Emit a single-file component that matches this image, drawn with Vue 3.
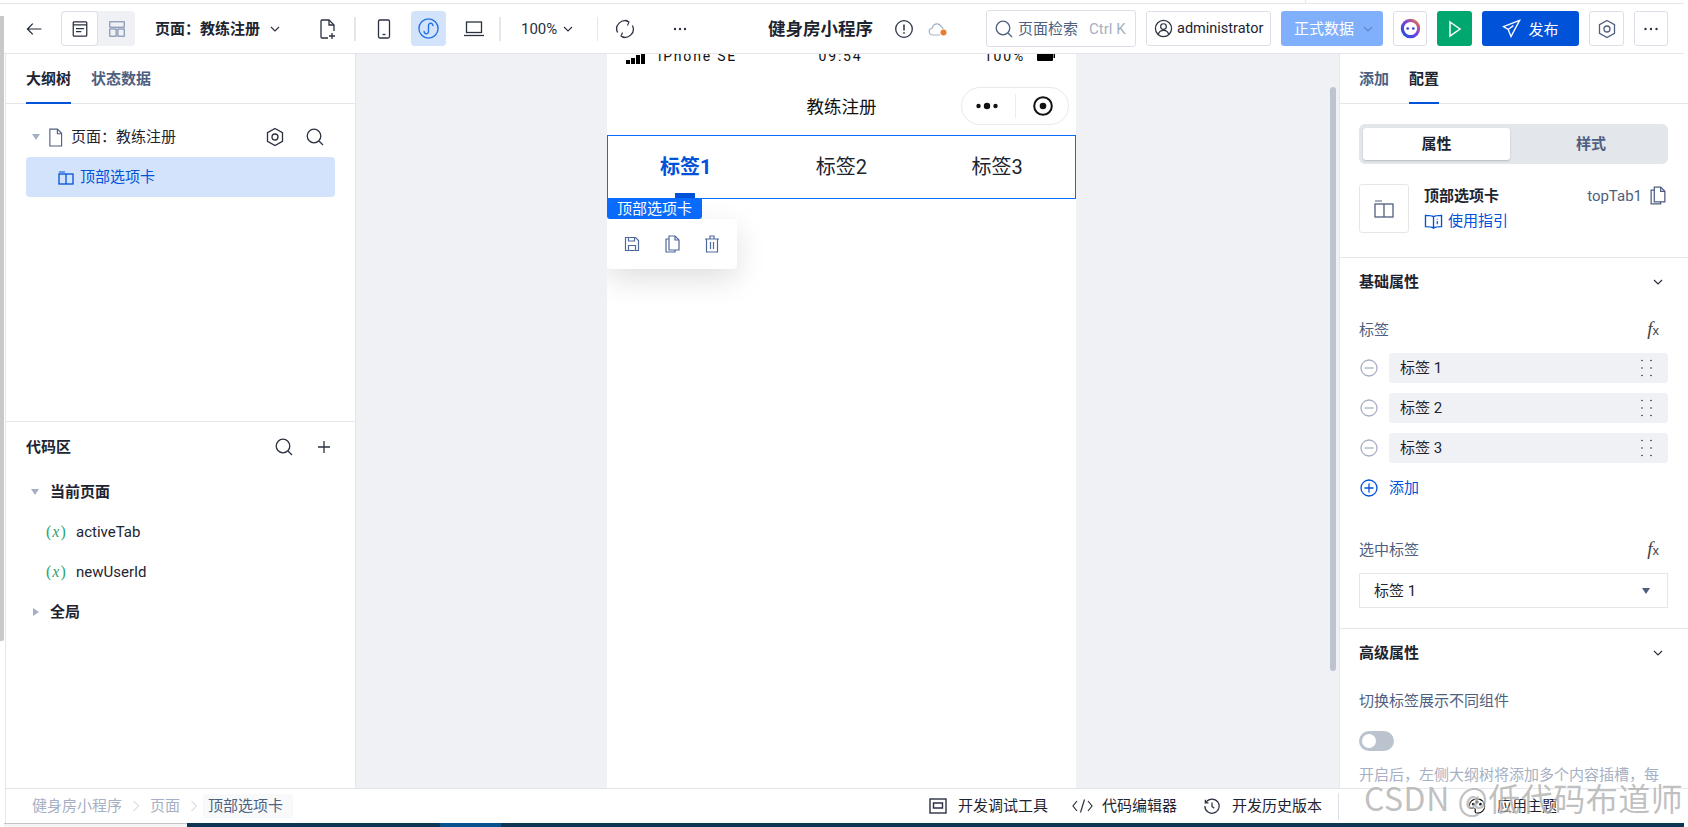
<script setup>
const tabs = [
  { label: '标签1', active: true },
  { label: '标签2', active: false },
  { label: '标签3', active: false }
]
const rows = ['标签 1', '标签 2', '标签 3']
const vars = ['activeTab', 'newUserId']
const pageName = '页面\uFF1A教练注册'
const hintText = '开启后\uFF0C左侧大纲树将添加多个内容插槽\uFF0C每'
</script>

<template>
  <div class="page">
    <div class="strip"></div>
    <div class="topgap"><i class="notch"></i></div>

    <header class="header">
      <svg class="ic back" viewBox="0 0 22 22" fill="none" stroke="#1f2733" stroke-width="1.500"><path d="M20 11H3M9.500 4.500 3 11l6.500 6.500"/></svg>
      <div class="seg">
        <button class="seg-a">
          <svg viewBox="0 0 20 20" width="18" height="18" fill="none" stroke="#2a3140" stroke-width="1.400"><rect x="2.500" y="2" width="15" height="16" rx="1"/><path d="M2.500 5.500h15M5.500 9.500h9M5.500 13h6"/></svg>
        </button>
        <button class="seg-b">
          <svg viewBox="0 0 20 20" width="18" height="18" fill="none" stroke="#6a7ea3" stroke-width="1.100"><rect x="2" y="2" width="16" height="6"/><rect x="2" y="10" width="7" height="8"/><rect x="11" y="10" width="7" height="8"/></svg>
        </button>
      </div>
      <div class="pagesel">{{ pageName }}</div>
      <svg class="chev c1" viewBox="0 0 12 12" fill="none" stroke="#2a3140" stroke-width="1.200"><path d="M2 4l4 4 4-4"/></svg>
      <svg class="ic newpage" viewBox="0 0 20 22" fill="none" stroke="#2a3140" stroke-width="1.300"><path d="M10 20H4a1 1 0 0 1-1-1V3a1 1 0 0 1 1-1h7l5 5v6"/><path d="M11 2v5h5"/><path d="M14 15v6M11 18h6"/></svg>
      <i class="vdiv d1"></i>
      <button class="ibtn b1">
        <svg viewBox="0 0 20 22" width="20" height="22" fill="none" stroke="#2a3140" stroke-width="1.300"><rect x="4.500" y="2" width="11" height="18" rx="1.500"/><path d="M8.500 16.500h3"/></svg>
      </button>
      <button class="ibtn b2 on">
        <svg viewBox="0 0 24 24" width="23" height="23" fill="none" stroke="#1e6fe8" stroke-width="1.400"><circle cx="12" cy="12" r="10"/><path d="M7.500 14.500a2.300 2.300 0 1 0 4.500.7V8.800a2.300 2.300 0 1 1 4.500.7"/></svg>
      </button>
      <button class="ibtn b2">
        <svg viewBox="0 0 22 20" width="22" height="20" fill="none" stroke="#2a3140" stroke-width="1.300"><rect x="3.500" y="3" width="15" height="10.500"/><path d="M1 16.500h20"/></svg>
      </button>
      <i class="vdiv d2"></i>
      <span class="zoomtxt">100%</span>
      <svg class="chev c2" viewBox="0 0 12 12" fill="none" stroke="#2a3140" stroke-width="1.100"><path d="M2 4l4 4 4-4"/></svg>
      <i class="vdiv d3"></i>
      <svg class="ic sync" viewBox="0 0 20 20" fill="none" stroke="#2a3140" stroke-width="1.300"><path d="M2.600 13.500A8 8 0 0 1 13.500 2.800"/><path d="M17.400 6.500A8 8 0 0 1 6.500 17.200"/><path d="M10.500 1 14 3l-1.500 3.500M9.500 19 6 17l1.500-3.500" stroke-width="1.100"/></svg>
      <svg class="ic more1" viewBox="0 0 20 20" fill="#2a3140"><circle cx="5" cy="10" r="1.200"/><circle cx="10" cy="10" r="1.200"/><circle cx="15" cy="10" r="1.200"/></svg>
      <div class="apptitle">健身房小程序</div>
      <svg class="ic info" viewBox="0 0 20 20" fill="none" stroke="#2a3140" stroke-width="1.300"><circle cx="10" cy="10" r="8.300"/><path d="M10 5.500v6M10 13.300v1.500" stroke-width="1.500"/></svg>
      <svg class="cloud" viewBox="0 0 20 16" fill="none" stroke="#a6b0c4" stroke-width="1.200"><path d="M12 14H5a3.500 3.500 0 0 1-.5-7 4.500 4.500 0 0 1 8.700-1.200 3.500 3.500 0 0 1 2 2.200"/><circle cx="15.500" cy="11.500" r="3" fill="#ed7b2f" stroke="none"/></svg>
      <div class="search">
        <svg viewBox="0 0 20 20" width="20" height="20" fill="none" stroke="#4e5f7f" stroke-width="1.300"><circle cx="9" cy="9" r="6.800"/><path d="M14 14l4 4"/></svg>
        <span class="s-txt">页面检索</span>
        <span class="s-key">Ctrl K</span>
      </div>
      <div class="user">
        <svg viewBox="0 0 20 20" width="19" height="19" fill="none" stroke="#2a3140" stroke-width="1.300"><circle cx="10" cy="10" r="8.500"/><circle cx="10" cy="8" r="3"/><path d="M4.500 16c1-3 3-4 5.500-4s4.500 1 5.500 4"/></svg>
        <span>administrator</span>
      </div>
      <div class="datasrc">
        <span>正式数据</span>
        <svg viewBox="0 0 12 12" width="12" height="12" fill="none" stroke="#5f86c8" stroke-width="1.200"><path d="M2 4l4 4 4-4"/></svg>
      </div>
      <button class="obtn ai">
        <svg viewBox="0 0 22 22" width="23" height="23">
          <defs><linearGradient id="aig" x1="0" y1="1" x2="1" y2="0"><stop offset="0" stop-color="#1c4fe0"/><stop offset=".55" stop-color="#7b3fe0"/><stop offset="1" stop-color="#f0783c"/></linearGradient></defs>
          <circle cx="11" cy="11" r="7.800" fill="none" stroke="url(#aig)" stroke-width="3"/>
          <circle cx="8.300" cy="11" r="1.300" fill="#3d3fd8"/><circle cx="13.700" cy="11" r="1.300" fill="#3d3fd8"/>
        </svg>
      </button>
      <button class="runbtn">
        <svg viewBox="0 0 16 18" width="16" height="18" fill="none" stroke="#fff" stroke-width="1.500"><path d="M3 2l10 7-10 7z"/></svg>
      </button>
      <button class="pub">
        <svg viewBox="0 0 20 20" width="19" height="19" fill="none" stroke="#fff" stroke-width="1.400"><path d="M18.500 1.500 1.500 8l5 3 3 7.500zM6.500 11 12 7"/></svg>
        <span>发布</span>
      </button>
      <button class="obtn gearb">
        <svg viewBox="0 0 20 20" width="20" height="20" fill="none" stroke="#4e5f7f" stroke-width="1.300"><path d="M10 1.500 17.500 5.700v8.600L10 18.500l-7.500-4.200V5.700z"/><circle cx="10" cy="10" r="3"/></svg>
      </button>
      <button class="obtn moreb">
        <svg viewBox="0 0 20 20" width="20" height="20" fill="#2a3140"><circle cx="4.500" cy="10" r="1.200"/><circle cx="10" cy="10" r="1.200"/><circle cx="15.500" cy="10" r="1.200"/></svg>
      </button>
    </header>

    <div class="main">
      <aside class="left">
        <div class="tabbar lt">
          <div class="tab active">大纲树</div>
          <div class="tab">状态数据</div>
        </div>
        <div class="outline">
          <div class="o-row">
            <i class="tri down t1"></i>
            <svg class="doc" viewBox="0 0 16 20" fill="none" stroke="#4e5f7f" stroke-width="1.200"><path d="M2 1h8l4.500 4.500V19H2z"/><path d="M10 1v5h4.500"/></svg>
            <span class="o-txt">{{ pageName }}</span>
            <svg class="ic act1" viewBox="0 0 20 20" fill="none" stroke="#2a3140" stroke-width="1.300"><path d="M10 1.500 17.500 5.700v8.600L10 18.500l-7.500-4.200V5.700z"/><circle cx="10" cy="10" r="3"/></svg>
            <svg class="ic act2" viewBox="0 0 20 20" fill="none" stroke="#2a3140" stroke-width="1.300"><circle cx="9" cy="9" r="6.800"/><path d="M14 14l4 4"/></svg>
          </div>
          <div class="o-sel">
            <svg viewBox="0 0 16 16" width="16" height="16" fill="none" stroke="#0052d9" stroke-width="1.300"><path d="M1 3h6" stroke-width="1"/><rect x="1" y="5" width="14" height="10"/><path d="M8 5v10"/></svg>
            <span>顶部选项卡</span>
          </div>
        </div>
        <div class="code">
          <div class="c-head">
            <span class="bold">代码区</span>
            <svg class="ic ca1" viewBox="0 0 20 20" fill="none" stroke="#2a3140" stroke-width="1.300"><circle cx="9" cy="9" r="6.800"/><path d="M14 14l4 4"/></svg>
            <svg class="ic ca2" viewBox="0 0 20 20" fill="none" stroke="#2a3140" stroke-width="1.300"><path d="M10 4v12M4 10h12"/></svg>
          </div>
          <div class="c-row group"><i class="tri down t2"></i><span class="bold">当前页面</span></div>
          <div class="c-row var" v-for="v in vars" :key="v"><span class="xv">(<i>x</i>)</span><span>{{ v }}</span></div>
          <div class="c-row group"><i class="tri rgt t3"></i><span class="bold">全局</span></div>
        </div>
      </aside>

      <section class="canvas">
        <div class="phone">
          <div class="status">
            <div class="st-l">
              <svg viewBox="0 0 20 10" width="20" height="10" fill="#000"><rect x="0" y="6" width="4" height="4"/><rect x="5" y="4" width="4" height="6"/><rect x="10" y="1" width="4" height="9"/><rect x="15" y="0" width="4" height="10"/></svg>
              <span>iPhone SE</span>
            </div>
            <span>09:54</span>
            <div class="st-r">
              <span>100%</span>
              <svg viewBox="0 0 18 10" width="18" height="10"><rect x="0" y="0" width="16" height="10" rx="1" fill="#000"/><rect x="16.500" y="3" width="1.500" height="4" fill="#000"/></svg>
            </div>
          </div>
          <div class="nav">教练注册</div>
          <div class="capsule">
            <svg viewBox="0 0 24 10" width="24" height="10" fill="#111"><circle cx="3.500" cy="5" r="2.200"/><circle cx="12" cy="5" r="3.200"/><circle cx="20.500" cy="5" r="2.200"/></svg>
            <i class="c-div"></i>
            <svg viewBox="0 0 20 20" width="20" height="20" fill="none"><circle cx="10" cy="10" r="8.800" stroke="#111" stroke-width="2"/><circle cx="10" cy="10" r="3.300" fill="#111"/></svg>
          </div>
          <div class="toptabs">
            <div v-for="t in tabs" :key="t.label" class="tt" :class="{ on: t.active }">
              {{ t.label }}
              <i v-if="t.active" class="ind"></i>
            </div>
            <div class="tag">顶部选项卡</div>
            <div class="tools">
              <svg viewBox="0 0 18 18" width="18" height="18" fill="none" stroke="#4e6a9c" stroke-width="1.200"><path d="M2.500 2.500h10l3 3v10h-13z"/><path d="M5.500 2.500v3.500h6V2.500M5.500 15.500V10.500h7v5"/></svg>
              <svg viewBox="0 0 18 20" width="18" height="20" fill="none" stroke="#4e6a9c" stroke-width="1.200"><path d="M6 2h6l4 4v10H6z"/><path d="M12 2v4h4M6 5H3v13h9v-2"/></svg>
              <svg viewBox="0 0 18 20" width="18" height="20" fill="none" stroke="#4e6a9c" stroke-width="1.200"><path d="M2 5h14M7 5V2h4v3M3.500 5v13h11V5M7.500 8v7M10.500 8v7"/></svg>
            </div>
          </div>
        </div>
        <i class="vscroll"></i>
      </section>

      <aside class="right">
        <div class="tabbar rt">
          <div class="tab">添加</div>
          <div class="tab active">配置</div>
        </div>
        <div class="info-sec">
          <div class="switch">
            <div class="sw on">属性</div>
            <div class="sw off">样式</div>
          </div>
          <div class="comp">
            <div class="comp-box">
              <svg viewBox="0 0 20 20" width="20" height="20" fill="none" stroke="#4e5f7f" stroke-width="1.300"><path d="M1 2h7" stroke-width="1"/><rect x="1" y="5" width="18" height="13"/><path d="M10 5v13"/></svg>
            </div>
            <div class="comp-meta">
              <div class="bold">顶部选项卡</div>
              <div class="guide">
                <svg viewBox="0 0 20 18" width="19" height="17" fill="none" stroke="#0052d9" stroke-width="1.400"><path d="M10 4C8 2.500 5 2.500 1.500 2.500v12c3.500 0 6.500 0 8.500 1.500 2-1.500 5-1.500 8.500-1.500v-12C15 2.500 12 2.500 10 4zM10 4v12"/><path d="M14 6v1M14 8.500V12" stroke-width="1.300"/></svg>
                <span>使用指引</span>
              </div>
            </div>
            <div class="comp-id">
              <span>topTab1</span>
              <svg viewBox="2 1 15 18" width="16" height="19" fill="none" stroke="#4e5f7f" stroke-width="1.200"><path d="M6 2h6l4 4v10H6z"/><path d="M12 2v4h4M6 5H3v13h9v-2"/></svg>
            </div>
          </div>
        </div>

        <div class="sec">
          <div class="sec-head">
            <span class="bold">基础属性</span>
            <svg viewBox="0 0 12 12" width="12" height="12" fill="none" stroke="#2a3140" stroke-width="1.200"><path d="M2 4l4 4 4-4"/></svg>
          </div>
          <div class="lab-row">
            <span>标签</span>
            <span class="fx"><i>f</i><small>x</small></span>
          </div>
          <div class="rows">
            <div class="row" v-for="r in rows" :key="r">
              <svg viewBox="0 0 18 18" width="18" height="18" fill="none" stroke="#a6b0c4" stroke-width="1.300"><circle cx="9" cy="9" r="8"/><path d="M4.500 9h9"/></svg>
              <div class="pill">
                <span>{{ r }}</span>
                <svg viewBox="0 0 12 20" width="12" height="20" fill="#333"><circle cx="2" cy="2.500" r=".8"/><circle cx="2" cy="10" r=".8"/><circle cx="2" cy="17.500" r=".8"/><circle cx="11" cy="2.500" r=".8"/><circle cx="11" cy="10" r=".8"/><circle cx="11" cy="17.500" r=".8"/></svg>
              </div>
            </div>
          </div>
          <div class="addrow">
            <svg viewBox="0 0 18 18" width="18" height="18" fill="none" stroke="#0052d9" stroke-width="1.300"><circle cx="9" cy="9" r="8"/><path d="M4.500 9h9M9 4.500v9"/></svg>
            <span>添加</span>
          </div>
          <div class="lab-row l2">
            <span>选中标签</span>
            <span class="fx"><i>f</i><small>x</small></span>
          </div>
          <div class="select">
            <span>标签 1</span>
            <i class="tri down t4"></i>
          </div>
        </div>

        <div class="sec adv">
          <div class="sec-head">
            <span class="bold">高级属性</span>
            <svg viewBox="0 0 12 12" width="12" height="12" fill="none" stroke="#2a3140" stroke-width="1.200"><path d="M2 4l4 4 4-4"/></svg>
          </div>
          <div class="lab-row l3"><span>切换标签展示不同组件</span></div>
          <div class="toggle"><i class="knob"></i></div>
          <div class="hint">{{ hintText }}</div>
        </div>
      </aside>
    </div>

    <footer class="footer">
      <div class="crumbs">
        <span class="cr">健身房小程序</span>
        <svg viewBox="0 0 8 12" width="8" height="12" fill="none" stroke="#c3cad8" stroke-width="1"><path d="M1.500 1l5 5-5 5"/></svg>
        <span class="cr">页面</span>
        <svg viewBox="0 0 8 12" width="8" height="12" fill="none" stroke="#c3cad8" stroke-width="1"><path d="M1.500 1l5 5-5 5"/></svg>
        <span class="cr cur">顶部选项卡</span>
      </div>
      <div class="f-right">
        <div class="f-item i1">
          <svg viewBox="0 0 18 18" width="18" height="18" fill="none" stroke="#2a3140" stroke-width="1.400"><rect x="1" y="2" width="16" height="14"/><path d="M4.500 6h9v5h-9z"/></svg>
          <span>开发调试工具</span>
        </div>
        <div class="f-item i2">
          <svg viewBox="0 0 21 16" width="21" height="16" fill="none" stroke="#2a3140" stroke-width="1.200"><path d="M5 3 1 8l4 5M12.500 1.500l-4 13M16 3l4 5-4 5"/></svg>
          <span>代码编辑器</span>
        </div>
        <div class="f-item i3">
          <svg viewBox="0 0 18 18" width="16" height="16" fill="none" stroke="#2a3140" stroke-width="1.400"><path d="M2.500 4.500A8 8 0 1 1 1 9M1.500 2v3.500H5M9 5v4.500l2.500 2"/></svg>
          <span>开发历史版本</span>
        </div>
        <i class="f-div"></i>
        <div class="f-item i4">
          <svg viewBox="0 0 20 20" width="18" height="18" fill="none" stroke="#111" stroke-width="1.400"><path d="M10 2C5 2 1.500 5.500 1.500 9.500c0 3 2.500 3.500 4 3 1.500-.5 3 .5 2.500 2-.5 2 .5 3.500 2.500 3.500 4.500 0 8-3.500 8-8S15 2 10 2z"/><circle cx="6" cy="8" r="1" fill="#111"/><circle cx="10" cy="5.500" r="1" fill="#111"/><circle cx="14" cy="8" r="1" fill="#111"/></svg>
          <span>应用主题</span>
        </div>
      </div>
    </footer>

    <div class="taskbar">
      <i class="tb-light"></i>
      <i class="tb-dark a"></i>
      <i class="tb-blue"></i>
      <i class="tb-dark b"></i>
    </div>

    <div class="watermark">CSDN @低代码布道师</div>
  </div>
</template>

<style>
html, body { margin: 0; padding: 0; background: #fff; }
</style>

<style scoped>
.page {
  position: relative;
  width: 1688px;
  height: 827px;
  overflow: hidden;
  background: #fff;
  display: flex;
  flex-direction: column;
  font-family: Roboto, "Noto Sans CJK SC", sans-serif;
  font-size: 15px;
  color: #1d2430;
  line-height: 20px;
}
* { box-sizing: border-box; }
button { padding: 0; margin: 0; background: none; border: 0; display: flex; align-items: center; justify-content: center; }
i { font-style: normal; display: block; }
.bold { font-weight: 700; }
.strip { position: absolute; left: 0; top: 16px; width: 4px; height: 625px; background: #c9c9c9; border-radius: 0 0 2px 0; z-index: 3; }
.topgap { height: 3px; position: relative; flex: none; }
.notch { position: absolute; left: 1305px; top: 0; width: 1px; height: 3px; background: #e7e9ee; }

.header { height: 51px; flex: none; display: flex; align-items: center; border-top: 1px solid #e3e6eb; border-bottom: 1px solid #e3e6eb; width: 1684px; }
.ic { width: 20px; height: 20px; flex: none; display: block; }
.back { width: 18px; height: 18px; margin-left: 25px; }
.seg { margin-left: 18px; width: 74px; height: 35px; background: #f0f1f5; border-radius: 4px; display: flex; }
.seg-a { width: 37px; height: 35px; background: #fff; border: 1px solid #dcdfe8; border-radius: 4px; }
.seg-b { width: 37px; height: 35px; }
.pagesel { margin-left: 20px; font-weight: 700; white-space: nowrap; width: 105px; }
.chev { width: 12px; height: 12px; flex: none; }
.c1 { margin-left: 9px; }
.newpage { margin-left: 37px; height: 22px; }
.vdiv { width: 2px; height: 24px; background: #e3e6eb; flex: none; }
.d1 { margin-left: 16px; }
.ibtn { width: 35px; height: 35px; border-radius: 4px; flex: none; }
.b1 { margin-left: 10px; }
.b2 { margin-left: 10px; }
.ibtn.on { background: #d2e3fb; }
.d2 { margin-left: 8px; }
.zoomtxt { margin-left: 20px; width: 37px; white-space: nowrap; color: #2a3140; }
.c2 { margin-left: 4px; }
.d3 { margin-left: 23px; width: 1px; }
.sync { margin-left: 17px; }
.more1 { margin-left: 35px; }
.apptitle { margin-left: 78px; width: 106px; font-size: 17.500px; font-weight: 700; white-space: nowrap; }
.info { margin-left: 20px; }
.cloud { margin-left: 14px; width: 20px; height: 16px; flex: none; }
.search { margin-left: 38px; width: 150px; height: 37px; border: 1px solid #dcdfe8; border-radius: 3px; display: flex; align-items: center; padding-left: 7px; flex: none; white-space: nowrap; }
.s-txt { margin-left: 4px; color: #4e5f7f; }
.s-key { margin-left: 11px; color: #a6b0c4; }
.user { margin-left: 10px; width: 125px; height: 35px; border: 1px solid #dcdfe8; border-radius: 3px; display: flex; align-items: center; gap: 4px; padding-left: 7px; flex: none; white-space: nowrap; font-size: 14.500px; }
.datasrc { margin-left: 10px; width: 102px; height: 35px; background: #80b0fb; border-radius: 3px; display: flex; align-items: center; padding-left: 13px; gap: 8px; color: #fff; flex: none; }
.obtn { height: 35px; border: 1px solid #dcdfe8; border-radius: 3px; flex: none; }
.ai { margin-left: 10px; width: 34px; }
.runbtn { margin-left: 10px; width: 35px; height: 35px; background: #00a870; border-radius: 3px; flex: none; }
.pub { margin-left: 10px; width: 97px; height: 35px; background: #0052d9; color: #fff; border-radius: 3px; gap: 7px; flex: none; font-size: 15px; font-family: inherit; }
.gearb { margin-left: 10px; width: 35px; }
.moreb { margin-left: 10px; width: 34px; }

.main { flex: 1; min-height: 0; display: flex; }
.left { margin-left: 5px; width: 351px; flex: none; border-left: 1px solid #e3e6eb; border-right: 1px solid #e3e6eb; display: flex; flex-direction: column; }
.tabbar { height: 50px; flex: none; display: flex; border-bottom: 1px solid #e3e6eb; }
.lt { padding-left: 20px; gap: 20px; }
.rt { padding-left: 19px; gap: 20px; }
.tab { height: 50px; display: flex; align-items: center; font-weight: 700; color: #4e5f7f; white-space: nowrap; position: relative; }
.tab.active { color: #1d2430; border-bottom: 2px solid #0052d9; padding-top: 2px; }
.outline { height: 318px; flex: none; border-bottom: 1px solid #e3e6eb; padding: 13px 20px 0; }
.o-row { height: 40px; display: flex; align-items: center; }
.tri { width: 0; height: 0; flex: none; }
.tri.down { border-left: 4px solid transparent; border-right: 4px solid transparent; border-top: 6px solid #a6b0c4; }
.tri.rgt { border-top: 4px solid transparent; border-bottom: 4px solid transparent; border-left: 6px solid #a6b0c4; }
.t1 { margin-left: 6px; }
.doc { width: 15px; height: 19px; margin-left: 8px; flex: none; }
.o-txt { margin-left: 8px; white-space: nowrap; }
.act1 { margin-left: auto; }
.act2 { margin-left: 20px; margin-right: 10px; }
.o-sel { height: 40px; background: #d2e3fb; border-radius: 4px; display: flex; align-items: center; padding-left: 32px; gap: 6px; color: #0052d9; }
.code { flex: 1; }
.c-head { height: 50px; display: flex; align-items: center; padding-left: 20px; }
.ca1 { margin-left: auto; }
.ca2 { margin-left: 20px; margin-right: 21px; }
.c-row { height: 40px; display: flex; align-items: center; }
.group { padding-left: 25px; }
.t2 { margin-right: 11px; }
.t3 { margin-left: 2px; margin-right: 11px; }
.var { padding-left: 40px; }
.xv { width: 20px; margin-right: 10px; color: #2ba471; font-family: "Liberation Serif", serif; white-space: nowrap; font-size: 16px; letter-spacing: 1px; }
.xv i { display: inline; font-style: italic; }

.canvas { flex: 1; min-width: 0; background: #f0f1f5; position: relative; overflow: hidden; }
.phone { margin-left: 251px; width: 469px; height: 100%; background: #fff; position: relative; overflow: hidden; }
.status { margin-top: -8px; height: 20px; display: grid; grid-template-columns: 1fr auto 1fr; align-items: center; padding: 0 21px 0 19px; font-size: 14px; letter-spacing: 1.800px; color: #111; }
.st-l { display: flex; align-items: center; gap: 12px; }
.st-l svg { margin-top: 6px; }
.st-r { display: flex; align-items: center; justify-content: flex-end; gap: 12px; }
.nav { margin-top: 13px; height: 56px; display: flex; align-items: center; justify-content: center; font-size: 17.500px; color: #111; }
.capsule { position: absolute; right: 7px; top: 33px; width: 108px; height: 38px; border: 1px solid #e8e9ec; border-radius: 19px; display: flex; align-items: center; padding-left: 13px; }
.c-div { width: 1px; height: 24px; background: #ececec; margin: 0 17px 0 16px; }
.toptabs { height: 64px; border: 1px solid #0a6cff; display: grid; grid-template-columns: repeat(3, 1fr); position: relative; }
.tt { display: flex; align-items: center; justify-content: center; font-size: 20px; color: #1d2430; position: relative; }
.tt.on { color: #0052d9; font-weight: 700; }
.ind { position: absolute; left: 67px; bottom: 0; width: 20px; height: 5px; background: #0052d9; }
.tag { position: absolute; left: -1px; top: 63px; width: 95px; height: 20px; background: #0a6cff; color: #fff; border-radius: 0 0 3px 3px; padding-left: 10px; white-space: nowrap; }
.tools { position: absolute; left: -1px; top: 83px; width: 130px; height: 50px; background: #fff; border-radius: 4px; box-shadow: 0 10px 30px rgba(0, 0, 0, .13); display: flex; align-items: center; gap: 22px; padding-left: 16px; }
.vscroll { position: absolute; right: 3px; top: 33px; width: 6px; height: 584px; background: #bdc3cf; border-radius: 3px; }

.right { width: 349px; flex: none; border-left: 1px solid #e3e6eb; overflow: hidden; }
.info-sec { padding: 20px 20px 24px 19px; border-bottom: 1px solid #e3e6eb; }
.switch { height: 40px; padding: 4px; background: #e3e6eb; border-radius: 6px; display: grid; grid-template-columns: 147px 1fr; }
.sw { display: flex; align-items: center; justify-content: center; font-weight: 700; color: #4e5f7f; }
.sw.off { padding-left: 8px; }
.sw.on { background: #fff; color: #1d2430; border-radius: 3px; box-shadow: 0 1px 2px rgba(0, 0, 0, .2); }
.comp { margin-top: 20px; display: flex; }
.comp-box { width: 50px; height: 49px; border: 1px solid #e3e6eb; border-radius: 3px; display: flex; align-items: center; justify-content: center; }
.comp-meta { margin-left: 15px; padding-top: 2px; }
.guide { margin-top: 5px; display: flex; align-items: center; gap: 5px; color: #0052d9; }
.comp-id { margin-left: auto; display: flex; align-items: flex-start; gap: 8px; color: #4e5f7f; padding-right: 2px; padding-top: 2px; }
.sec { padding: 0 20px 20px 19px; border-bottom: 1px solid #e3e6eb; }
.sec-head { height: 48px; display: flex; align-items: center; justify-content: space-between; padding-right: 4px; }
.lab-row { margin-top: 14px; display: flex; justify-content: space-between; color: #4e5f7f; height: 20px; align-items: center; padding-right: 9px; }
.fx { font-family: "Liberation Serif", serif; color: #444; font-size: 19px; display: flex; align-items: baseline; }
.fx i { font-style: italic; }
.fx small { font-size: 13px; font-family: "Liberation Sans", sans-serif; }
.rows { margin-top: 13px; display: flex; flex-direction: column; gap: 10px; }
.row { display: flex; align-items: center; gap: 11px; padding-left: 1px; }
.pill { flex: 1; height: 30px; background: #f0f1f5; border-radius: 3px; display: flex; align-items: center; justify-content: space-between; padding: 0 16px 0 11px; }
.addrow { margin-top: 15px; height: 20px; display: flex; align-items: center; gap: 11px; color: #0052d9; padding-left: 1px; }
.l2 { margin-top: 42px; }
.select { margin-top: 13px; height: 35px; border: 1px solid #e3e6eb; display: flex; align-items: center; justify-content: space-between; padding: 0 17px 0 14px; }
.t4 { border-top-color: #4e5f7f !important; }
.adv { border-bottom: 0; }
.l3 { margin-top: 14px; }
.toggle { margin-top: 20px; width: 35px; height: 20px; background: #bbc3cf; border-radius: 10px; padding: 3px; }
.knob { width: 14px; height: 14px; background: #fff; border-radius: 50%; }
.hint { margin-top: 14px; color: #a6b0c4; white-space: nowrap; }

.footer { height: 35px; flex: none; margin-left: 5px; border-left: 1px solid #e3e6eb; border-top: 1px solid #e3e6eb; display: flex; align-items: center; background: #fff; }
.crumbs { margin-left: 26px; display: flex; align-items: center; gap: 10px; color: #a6b0c4; white-space: nowrap; }
.cr.cur { color: #4e5f7f; background: #f8f9fa; padding: 2px 10px 2px 5px; margin-left: -5px; }
.f-right { margin-left: auto; display: flex; align-items: center; white-space: nowrap; color: #1d2430; padding-right: 131px; }
.f-item { display: flex; align-items: center; }
.i1 { gap: 11px; }
.i2 { margin-left: 24px; gap: 9px; }
.i3 { margin-left: 27px; gap: 12px; }
.f-div { width: 1px; height: 27px; background: #dcdfe8; margin-left: 16px; }
.i4 { margin-left: 129px; gap: 11px; }

.taskbar { height: 4px; flex: none; display: flex; padding-right: 4px; }
.tb-light { margin-left: 4px; width: 183px; height: 4px; border-top: 1px solid #c4c4c4; background: #f4f4f4; }
.tb-dark { height: 4px; background: #0d3654; }
.tb-dark.a { width: 253px; }
.tb-blue { width: 61px; height: 4px; background: #05528f; }
.tb-dark.b { flex: 1; }

.watermark { position: absolute; left: 1364px; top: 774px; white-space: nowrap; font-family: "Noto Sans CJK SC", sans-serif; font-size: 32px; line-height: 46px; letter-spacing: .5px; color: rgba(130, 130, 130, .5); text-shadow: 1px 1px 0 rgba(255, 255, 255, .5), -1px -1px 0 rgba(255, 255, 255, .5); z-index: 5; pointer-events: none; }
</style>
